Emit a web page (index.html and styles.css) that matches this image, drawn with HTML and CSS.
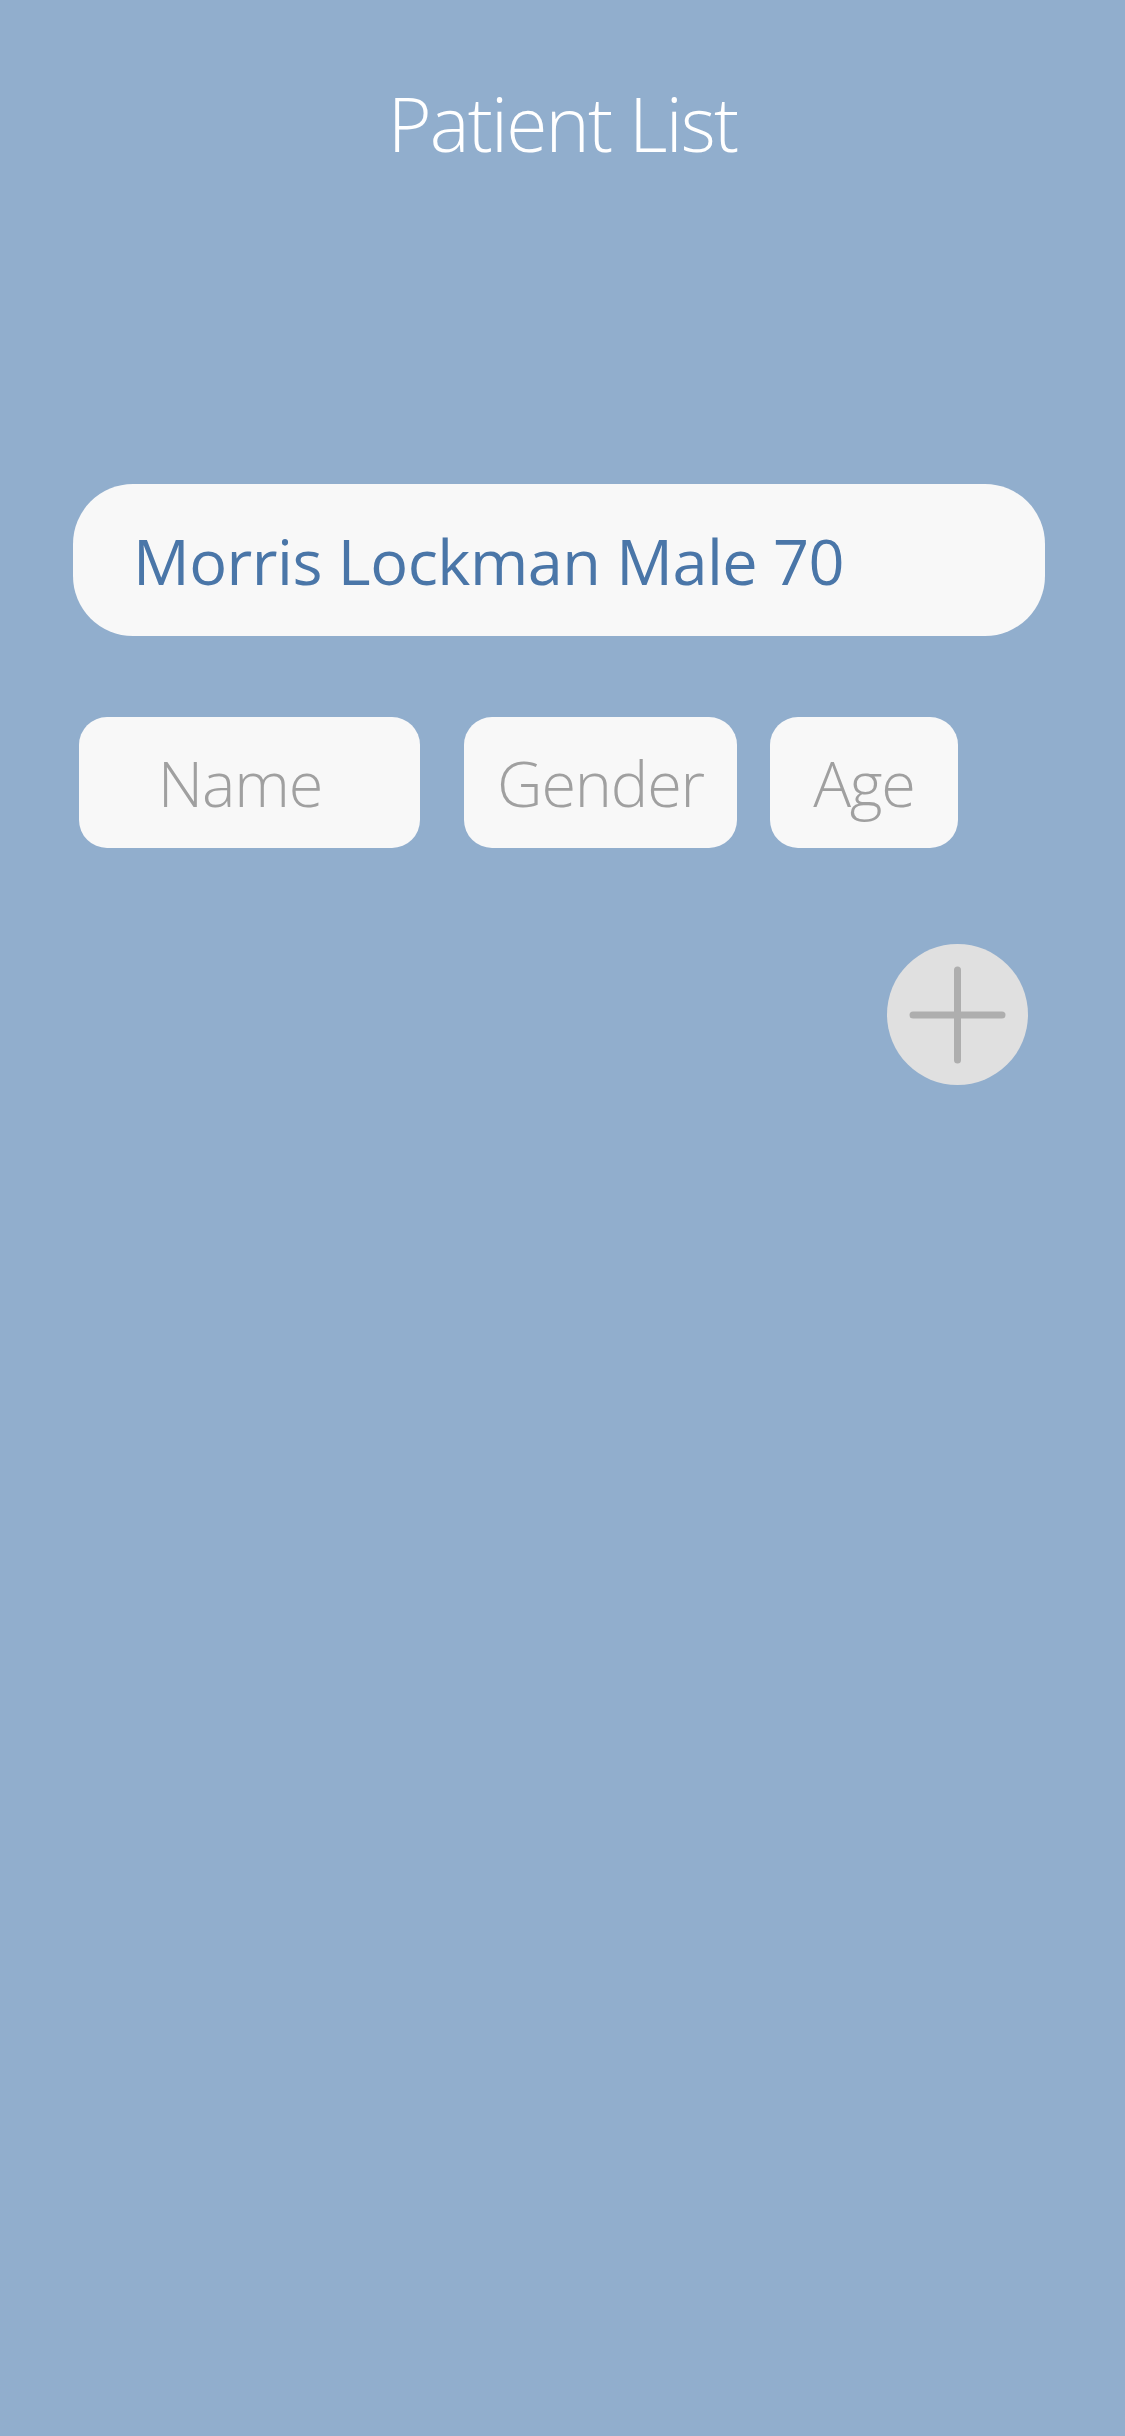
FILE: index.html
```html
<!DOCTYPE html>
<html lang="en">
<head>
<meta charset="utf-8">
<title>Patient List</title>
<link rel="stylesheet" href="styles.css">
</head>
<body>
<div class="screen">
  <h1 class="title">Patient List</h1>
  <div class="patient-card">
    <span class="patient-text">Morris Lockman Male 70</span>
  </div>
  <div class="field-row">
    <div class="field field-name">Name</div>
    <div class="field field-gender">Gender</div>
    <div class="field field-age">Age</div>
  </div>
  <div class="add-row">
    <button class="add-btn" type="button" aria-label="Add patient">
      <svg width="141" height="141" viewBox="0 0 141 141">
        <line x1="70.5" y1="26" x2="70.5" y2="116" stroke="#aeaeae" stroke-width="7" stroke-linecap="round"/>
        <line x1="26" y1="71" x2="115" y2="71" stroke="#aeaeae" stroke-width="7" stroke-linecap="round"/>
      </svg>
    </button>
  </div>
</div>
</body>
</html>
```
FILE: styles.css
```css
html, body {
  margin: 0;
  padding: 0;
}
body {
  background: #91aecd;
  font-family: "Open Sans", "Noto Sans", sans-serif;
  width: 1125px;
  min-height: 2436px;
}
.screen {
  display: flex;
  flex-direction: column;
  padding-top: 73px;
}
.title {
  margin: 0;
  font-size: 75px;
  font-weight: 300;
  line-height: 100px;
  letter-spacing: -1.8px;
  color: #ffffff;
  text-align: center;
}
.patient-card {
  margin: 311px 0 0 73px;
  width: 972px;
  height: 152px;
  box-sizing: border-box;
  background: #f8f8f8;
  border-radius: 60px;
  display: flex;
  align-items: center;
  padding-left: 60px;
}
.patient-text {
  font-size: 63px;
  line-height: 63px;
  letter-spacing: -0.5px;
  color: #4a76a8;
  font-weight: 400;
}
.field-row {
  display: flex;
  margin: 81px 0 0 79px;
}
.field {
  height: 131px;
  box-sizing: border-box;
  background: #f8f8f8;
  border-radius: 28px;
  display: flex;
  align-items: center;
  justify-content: center;
  font-size: 63px;
  font-weight: 300;
  letter-spacing: -1.2px;
  color: #a0a0a0;
}
.field-name {
  width: 341px;
  padding-right: 19px;
}
.field-gender {
  width: 273px;
  margin-left: 44px;
}
.field-age {
  width: 188px;
  margin-left: 33px;
}
.add-row {
  display: flex;
  justify-content: flex-end;
  padding-right: 97px;
  margin-top: 96px;
}
.add-btn {
  width: 141px;
  height: 141px;
  border-radius: 50%;
  border: none;
  padding: 0;
  margin: 0;
  background: #e0e0e0;
  display: block;
}
.add-btn svg {
  display: block;
}
```
